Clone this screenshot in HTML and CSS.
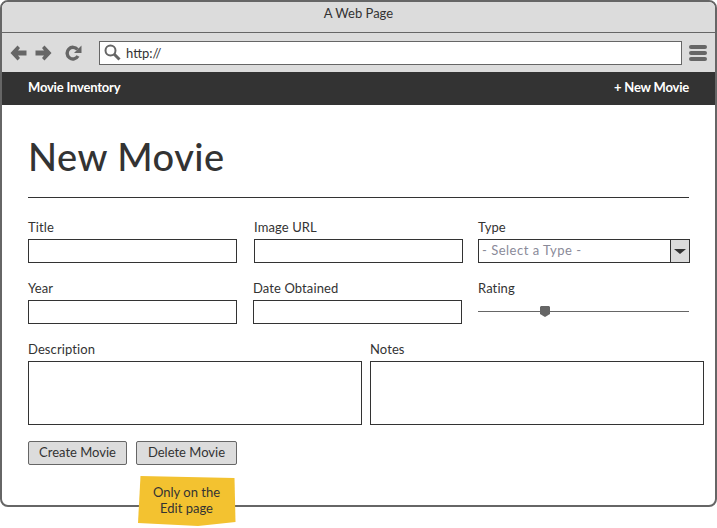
FILE: index.html
```html
<!DOCTYPE html>
<html lang="en">
  <head>
    <meta charset="UTF-8" />
    <meta name="viewport" content="width=device-width, initial-scale=1.0" />
    <title>A Web Page</title>
    <link rel="stylesheet" href="styles.css">
  </head>

  <body>
    <div class="window">
      <div class="title-bar">A Web Page</div>

      <div class="tool-bar">
        <svg class="icon-back" width="17" height="16" viewBox="0 0 17 16">
          <path d="M7.500 0.500 L10 3 L8 5.500 H16.500 V10.500 H8 L10 13 L7.500 15.500 L0.500 8 Z" fill="#666" />
        </svg>
        <svg class="icon-forward" width="17" height="16" viewBox="0 0 17 16">
          <path d="M9.500 0.500 L7 3 L9 5.500 H0.500 V10.500 H9 L7 13 L9.500 15.500 L16.500 8 Z" fill="#666" />
        </svg>
        <svg class="icon-reload" width="17" height="16" viewBox="0 0 17 16">
          <path d="M13 11 A5.800 5.800 0 1 1 12.500 4.500" fill="none" stroke="#666" stroke-width="3.400" />
          <path d="M9 8 H16.500 V0.500 Z" fill="#666" />
        </svg>
        <div class="address">
          <svg width="17" height="17" viewBox="0 0 17 17">
            <circle cx="6.500" cy="6.500" r="5" fill="none" stroke="#666" stroke-width="2" />
            <path d="M10 10 L15.500 15.500" stroke="#666" stroke-width="3" />
          </svg>
          <span>http://</span>
        </div>
        <div class="burger"><i></i><i></i><i></i></div>
      </div>

      <nav class="nav">
        <a>Movie Inventory</a>
        <a>+ New Movie</a>
      </nav>

      <main class="content">
        <h1>New Movie</h1>
        <hr />

        <div class="row row-one">
          <div class="field">
            <label>Title</label>
            <div class="input"></div>
          </div>
          <div class="field">
            <label>Image URL</label>
            <div class="input"></div>
          </div>
          <div class="field">
            <label>Type</label>
            <div class="select">
              <span>- Select a Type -</span>
              <div class="select-btn"><b></b></div>
            </div>
          </div>
        </div>

        <div class="row row-two">
          <div class="field">
            <label>Year</label>
            <div class="input"></div>
          </div>
          <div class="field">
            <label>Date Obtained</label>
            <div class="input"></div>
          </div>
          <div class="field">
            <label>Rating</label>
            <div class="slider">
              <svg class="thumb" width="10" height="11" viewBox="0 0 10 11">
                <path d="M1 0 H9 L10 1 V8 L5 11 L0 8 V1 Z" fill="#666" />
              </svg>
            </div>
          </div>
        </div>

        <div class="row row-three">
          <div class="field">
            <label>Description</label>
            <div class="textarea"></div>
          </div>
          <div class="field">
            <label>Notes</label>
            <div class="textarea"></div>
          </div>
        </div>

        <div class="buttons">
          <button class="btn-create">Create Movie</button>
          <button class="btn-delete">Delete Movie</button>
        </div>
      </main>

      <svg class="note-bg" width="98" height="50" viewBox="0 0 98 50">
        <path d="M2.500 0 L96.500 2 L97.500 46 L60 50 L0 47 Z" fill="#f3c230" />
      </svg>
      <div class="note">Only on the<br />Edit page</div>
    </div>
  </body>
</html>
```

FILE: styles.css
```css
* {
  margin: 0;
  padding: 0;
  box-sizing: border-box;
}

html,
body {
  height: 528px;
}

body {
  background: #fff;
  color: #333;
  font-family: "Lato", "Liberation Sans", sans-serif;
  font-size: 13px;
}

.window {
  position: relative;
  width: 717px;
  height: 507px;
  border: 2px solid #666;
  border-radius: 8px;
}

.title-bar {
  height: 31px;
  background: #dcdcdc;
  border-radius: 6px 6px 0 0;
  border-bottom: 1px solid #666;
  text-align: center;
  font-size: 13px;
  line-height: 23px;
}

.tool-bar {
  display: flex;
  align-items: center;
  height: 39px;
  background: #dcdcdc;
  padding-left: 8px;
}

.icon-forward {
  margin-left: 8px;
}

.icon-reload {
  margin-left: 13px;
}

.address {
  display: flex;
  align-items: center;
  gap: 5px;
  width: 583px;
  height: 24px;
  margin-left: 17px;
  padding-left: 4px;
  background: #fff;
  border: 1px solid #666;
  font-size: 13px;
}

.burger {
  display: flex;
  flex-direction: column;
  gap: 2px;
  margin-left: 7px;
}

.burger i {
  display: block;
  width: 18px;
  height: 4px;
  background: #666;
  border-radius: 2px;
}

.nav {
  display: flex;
  justify-content: space-between;
  height: 33px;
  padding: 7px 26px 0;
  background: #333;
  color: #fff;
  font-size: 13px;
  font-weight: 700;
  letter-spacing: -0.2px;
}

.content {
  padding: 0 26px;
}

h1 {
  height: 92px;
  padding-top: 26px;
  font-size: 38px;
  font-weight: 500;
  line-height: 50px;
  letter-spacing: 0.5px;
}

hr {
  width: 661px;
  height: 1px;
  background: #333;
  border: 0;
}

.row {
  display: grid;
}

.row-one {
  grid-template-columns: 226px 224px 212px;
  margin-top: 20px;
}

.row-two {
  grid-template-columns: 225px 225px 211px;
  margin-top: 16px;
}

.row-three {
  grid-template-columns: 342px 334px;
  margin-top: 16px;
}

label {
  display: block;
  height: 21px;
  line-height: 19px;
  font-size: 13px;
  letter-spacing: 0.1px;
}

.input {
  width: 209px;
  height: 24px;
  border: 1px solid #333;
}

.select {
  display: flex;
  justify-content: space-between;
  height: 24px;
  border: 1px solid #333;
  color: #8a8a99;
  line-height: 21px;
  letter-spacing: 0.5px;
  padding-left: 3px;
}

.select-btn {
  display: flex;
  align-items: center;
  justify-content: center;
  width: 19px;
  background: #dcdcdc;
  border-left: 1px solid #333;
}

.select-btn b {
  border-top: 5px solid #333;
  border-left: 6px solid transparent;
  border-right: 6px solid transparent;
}

.slider {
  position: relative;
  height: 1px;
  margin-top: 11px;
  background: #666;
}

.thumb {
  position: absolute;
  left: 62px;
  top: -5px;
}

.textarea {
  width: 334px;
  height: 64px;
  border: 1px solid #333;
}

.buttons {
  display: flex;
  gap: 9px;
  margin-top: 16px;
}

button {
  height: 24px;
  padding-bottom: 2px;
  background: #dcdcdc;
  border: 1px solid #666;
  border-radius: 2px;
  color: #333;
  font-family: inherit;
  font-size: 13px;
}

.btn-create {
  width: 99px;
}

.btn-delete {
  width: 101px;
}

.note-bg {
  position: absolute;
  left: 136px;
  top: 474px;
}

.note {
  position: absolute;
  left: 135px;
  top: 482px;
  width: 98px;
  padding-left: 1px;
  text-align: center;
  font-size: 13px;
  line-height: 16px;
}
```
